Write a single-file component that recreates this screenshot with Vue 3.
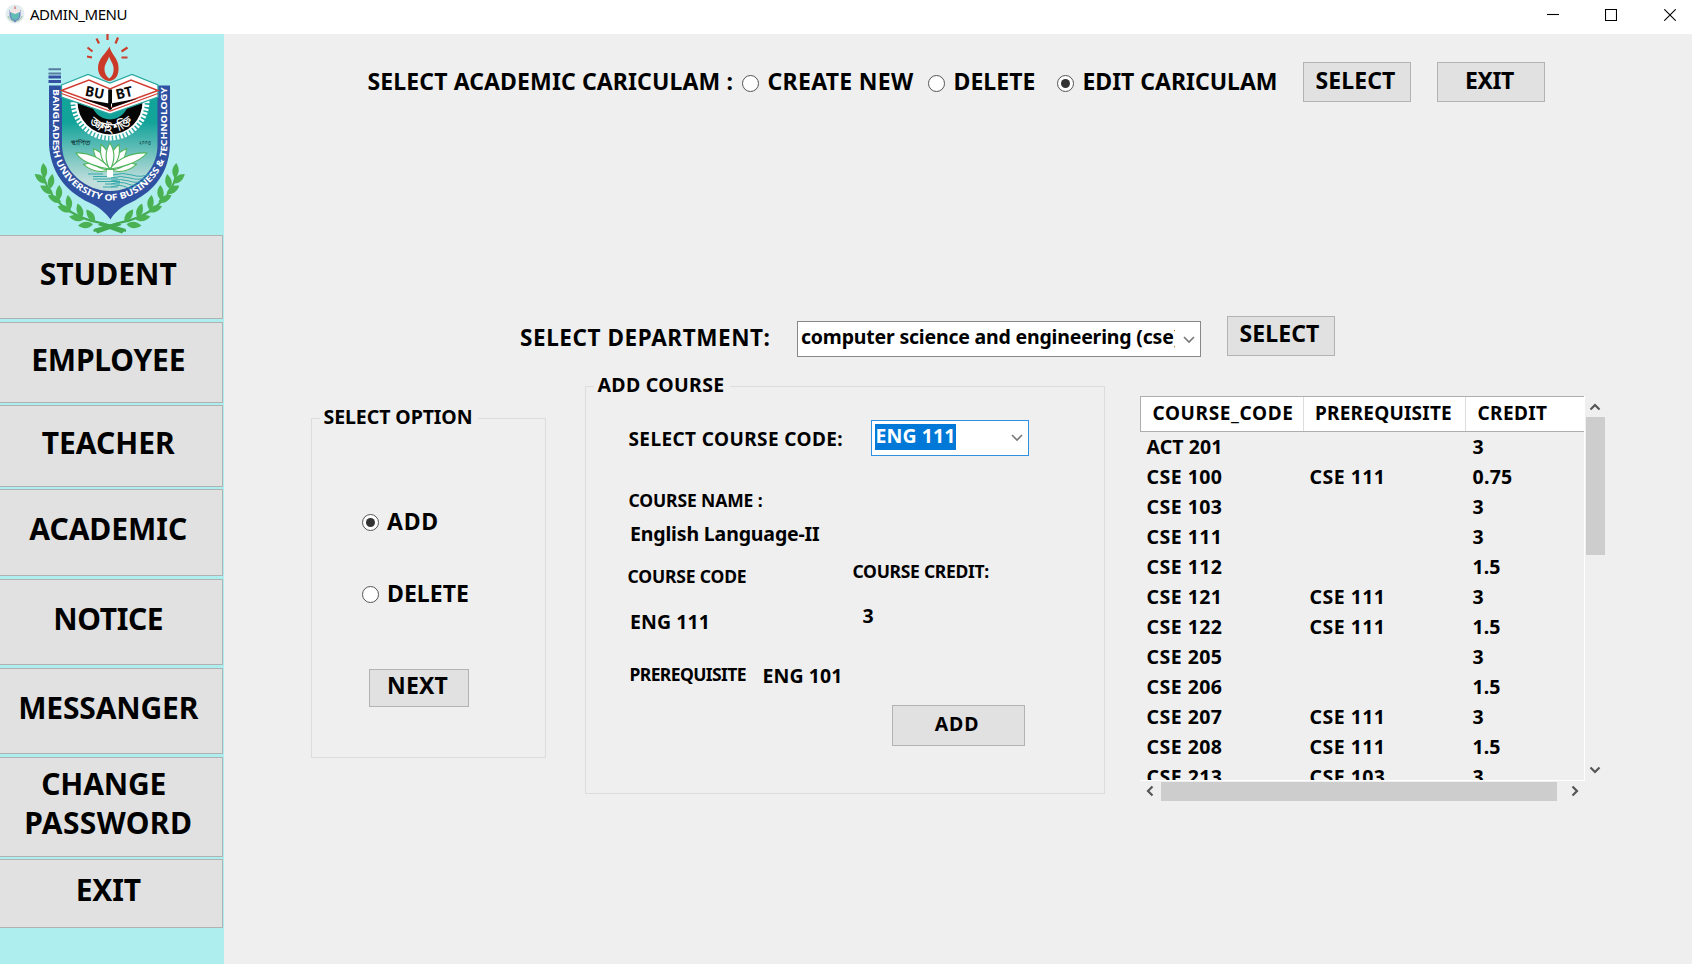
<script setup>
const menu = [
  { lines: [{ text: 'STUDENT', w: 137 }], cls: 'm1' },
  { lines: [{ text: 'EMPLOYEE', w: 154 }], cls: 'm2' },
  { lines: [{ text: 'TEACHER', w: 133 }], cls: 'm3' },
  { lines: [{ text: 'ACADEMIC', w: 158 }], cls: 'm4' },
  { lines: [{ text: 'NOTICE', w: 110 }], cls: 'm5' },
  { lines: [{ text: 'MESSANGER', w: 180 }], cls: 'm6' },
  { lines: [{ text: 'CHANGE', w: 125, nudge: true }, { text: 'PASSWORD', w: 168 }], cls: 'm7' },
  { lines: [{ text: 'EXIT', w: 65 }], cls: 'm8' },
]

const rows = [
  ['ACT 201', '', '3'],
  ['CSE 100', 'CSE 111', '0.75'],
  ['CSE 103', '', '3'],
  ['CSE 111', '', '3'],
  ['CSE 112', '', '1.5'],
  ['CSE 121', 'CSE 111', '3'],
  ['CSE 122', 'CSE 111', '1.5'],
  ['CSE 205', '', '3'],
  ['CSE 206', '', '1.5'],
  ['CSE 207', 'CSE 111', '3'],
  ['CSE 208', 'CSE 111', '1.5'],
  ['CSE 213', 'CSE 103', '3'],
]
const cellWidth = (t) => ({ 3: 12, 1.5: 28, 0.75: 40 })[t] || (t ? 76 : 0)

const petals = [-78, 78, -58, 58, -38, 38, -19, 19, 0]
const leaves = [
  [44, 171, -6], [41, 179, -52], [51, 182, 10], [47, 190, -58], [59, 193, 2],
  [55, 199, -62], [69, 203, -8], [65, 209, -70], [80, 211, -18], [77, 218, -80], [91, 216, -35], [86, 225, -96],
]

// Tracks a label out (or in) so that it fills the given width in pixels.
const vFit = {
  mounted(el, { value }) {
    if (!value || !el.textContent) return
    const range = document.createRange()
    range.selectNodeContents(el)
    const width = range.getBoundingClientRect().width
    el.style.letterSpacing = `${(value - width) / el.textContent.trim().length}px`
  },
}
</script>

<template>
  <div class="window">
    <header class="titlebar">
      <svg class="app-icon" viewBox="0 0 20 20">
        <circle cx="10" cy="10" r="9.5" fill="#e3ecee" />
        <path d="M4.500 6v5c0 4 3 5.500 5.500 7.500 2.500-2 5.500-3.500 5.500-7.500V6" fill="#6f88c0" />
        <path d="M6 8h8v4c0 2-2 3-4 4-2-1-4-2-4-4z" fill="#5fbdb6" />
        <path d="M5 6l3-1 2 1 2-1 3 1v2l-5 2-5-2z" fill="#f4e5e4" />
        <path d="M10 1.500l1.200 2.800-1.200 1-1.200-1z" fill="#d98680" />
        <path d="M3 12c1 3 3 5 6 5M17 12c-1 3-3 5-6 5" fill="none" stroke="#94c6a2" />
      </svg>
      <span class="title" v-fit="97">ADMIN_MENU</span>
      <div class="controls">
        <svg class="min" viewBox="0 0 12 12"><path d="M0 5.500h12" /></svg>
        <svg viewBox="0 0 12 12"><path d="M.5.5h11v11H.5z" /></svg>
        <svg viewBox="0 0 12 12"><path d="M.3.3l11.400 11.400M11.700.3L.3 11.700" /></svg>
      </div>
    </header>

    <div class="body">
      <nav class="sidebar">
        <svg class="crest" viewBox="0 34 223 201">
          <defs>
            <linearGradient id="field" x1="0" y1="0" x2="0" y2="1">
              <stop offset="0.300" stop-color="#12a399" />
              <stop offset="0.900" stop-color="#bfdedc" />
            </linearGradient>
            <clipPath id="below"><path d="M62 100H158V160H62z" /></clipPath>
            <path id="motto" d="M52.500 89V146C54 173 80 199.500 110 200.500C140 199.500 166 173 167.500 146V87" />
            <path id="arc" d="M89 121C99 136 122 136 135 119" />
          </defs>
          <path d="M92 57.500L87 56.500M92.500 51.500L87.500 47.500M99 43.500L96.500 38.500M107.500 40V34M115.500 43.500L118 37.500M121.500 51.500L127.500 47.500M121.500 57.500H127.500" stroke="#cb3f2c" stroke-width="2.200" />
          <path d="M109.500 46.500C106 54 98 58 98 68C98 76 104 80.500 109.500 81C116 80 119 75 118.500 67C118 58 111 54 109.500 46.500zM109 56.500C111 62 114.500 65 113.500 71C113 75 111 77.500 109 78.500C106 76 104.500 73 104.500 69C104.500 64 108 61 109 56.500z" fill="#cb3a29" fill-rule="evenodd" />
          <path d="M48.500 69.300H61M48.500 73.500H61" stroke="#587ba0" stroke-width="2" />
          <path d="M48.500 77H61M48.500 81.500H61" stroke="#3451a3" stroke-width="3" />
          <path d="M49 85.500H62V98H157.500V85.500H170V145C169 178 148 194 132 202C122 206 114 213 110.500 219.500C106 213 98 206 88 202C72 194 51 178 49 145z" fill="#2f51a2" />
          <path d="M62 92H157.500V146C157 172 134 191 110 191C86 191 63 172 62 146z" fill="url(#field)" />
          <g clip-path="url(#below)">
            <circle cx="110" cy="101" r="36.500" fill="none" stroke="#fff" stroke-width="6" stroke-dasharray="2.200 1.500" />
            <circle cx="110" cy="101" r="35" fill="#fff" />
            <circle cx="110" cy="102" r="32.500" fill="#050505" />
            <circle cx="110" cy="101" r="18.500" fill="#15a198" />
          </g>
          <path d="M61.500 85L88 74.500L110 83L132 74.500L158 85V97L110 114L61.500 97z" fill="#fff" stroke="#28aaa0" stroke-width="1.300" />
          <path d="M61.500 90.500L89 80L110 89L131 80L158 90.500L110 108z" fill="#fff" stroke="#d23d32" stroke-width="1.500" />
          <path d="M61.500 93.500L110 111L158 93.500" fill="none" stroke="#d23d32" stroke-width="1.200" />
          <path d="M108.200 89.500H112V109L110 110L108.200 109zM109 108L81 98.500L109 103.500zM111 108L138 98.500L111 103.500z" fill="#070707" />
          <g class="crest-word">
            <text x="84.500" y="95.500" transform="rotate(11 84.500 95.500)" textLength="19" lengthAdjust="spacingAndGlyphs">BU</text>
            <text x="117" y="99.500" transform="rotate(-13 117 99.500)" textLength="17" lengthAdjust="spacingAndGlyphs">BT</text>
          </g>
          <text class="bangla white"><textPath href="#arc" startOffset="1" textLength="50" lengthAdjust="spacingAndGlyphs">জ্ঞানই শক্তি</textPath></text>
          <text class="bangla dark" x="71" y="145">স্থাপিত</text>
          <text class="bangla dark" x="139" y="145" textLength="12" lengthAdjust="spacingAndGlyphs">২০০৩</text>
          <g fill="#fff" stroke="#4eb45b" stroke-width="1.100">
            <path v-for="p in petals" :key="p" :transform="`rotate(${p} 110 170)`" d="M110 170C104.500 160 104.500 152 110 143L110 143C115.500 152 115.500 160 110 170z" />
            <path d="M110 169C100 168 82 163 76 153C88 152 102 158 110 169zM110 169C120 168 138 163 147 153C133 152 118 158 110 169z" />
          </g>
          <g stroke="#35a9aa" stroke-width="1" fill="none">
            <path d="M88 174H103M93 176.500H111M93 179H118M97 181.500H120M105 184H120M103 187H118" />
            <path d="M113 175q10-3 19 0t18-1M111 178q10-3 19 0t18-1M111 181q10-3 18 0t17-1M111 184q10-3 17 0t14-1M111 187q9-3 15 0t9-1" />
          </g>
          <rect x="107" y="170" width="6" height="7" fill="#fff" />
          <text class="motto"><textPath href="#motto" textLength="288" lengthAdjust="spacingAndGlyphs">BANGLADESH UNIVERSITY OF BUSINESS &amp; TECHNOLOGY</textPath></text>
          <g v-for="side in [1, -1]" :key="side" :transform="side === 1 ? '' : 'translate(219.500 0) scale(-1 1)'">
            <path d="M43 171C46 199 72 218 101 223L126 231" fill="none" stroke="#43a951" stroke-width="2" />
            <path d="M101 222L126 229L122 233.500L98 225z" fill="#43a951" />
            <path v-for="(l, i) in leaves" :key="i" :transform="`translate(${l[0]} ${l[1]}) rotate(${l[2]})`" d="M0 7C-4.500 3-4-3 0-8C4-3 4.500 2 0 7z" fill="#4bb254" />
          </g>
        </svg>
        <button v-for="m in menu" :key="m.cls" :class="['menu', m.cls]">
          <span v-for="l in m.lines" :key="l.text" :class="['menu-line', { nudge: l.nudge }]"><span v-fit="l.w">{{ l.text }}</span></span>
        </button>
      </nav>

      <main class="main">
        <section class="top-row">
          <span class="head-label" v-fit="365.500">SELECT ACADEMIC CARICULAM :</span>
          <i class="radio r-create"></i><span v-fit="146">CREATE NEW</span>
          <i class="radio r-delete"></i><span v-fit="82">DELETE</span>
          <i class="radio on r-edit"></i><span v-fit="195">EDIT CARICULAM</span>
          <button class="btn btn-select"><span v-fit="80">SELECT</span></button>
          <button class="btn btn-exit"><span v-fit="49">EXIT</span></button>
        </section>

        <section class="dept-row">
          <span class="dept-label" v-fit="250.500">SELECT DEPARTMENT:</span>
          <div class="combo dept-combo">
            <span class="combo-text"><span v-fit="379">computer science and engineering (cse)</span></span>
            <svg class="chev" viewBox="0 0 12 8"><path d="M1 1l5 5 5-5" /></svg>
          </div>
          <button class="btn dept-btn"><span v-fit="80">SELECT</span></button>
        </section>

        <section class="panels">
          <fieldset class="box option-box">
            <legend><span v-fit="149">SELECT OPTION</span></legend>
            <div class="option o-add"><i class="radio on"></i><span v-fit="52">ADD</span></div>
            <div class="option o-del"><i class="radio"></i><span v-fit="82">DELETE</span></div>
            <button class="btn next"><span v-fit="61">NEXT</span></button>
          </fieldset>

          <fieldset class="box course-box">
            <legend><span v-fit="127">ADD COURSE</span></legend>
            <div class="line l-select">
              <span class="code-label" v-fit="214.500">SELECT COURSE CODE:</span>
              <div class="combo code-combo">
                <span class="picked"><span v-fit="80">ENG 111</span></span>
                <svg class="chev" viewBox="0 0 12 8"><path d="M1 1l5 5 5-5" /></svg>
              </div>
            </div>
            <div class="line l-name small"><span v-fit="134">COURSE NAME :</span></div>
            <div class="line l-lang"><span v-fit="189.500">English Language-II</span></div>
            <div class="line l-heads small">
              <div class="left"><span v-fit="119">COURSE CODE</span></div>
              <div class="right"><span v-fit="136.500">COURSE CREDIT:</span></div>
            </div>
            <div class="line l-values">
              <div class="left"><span v-fit="80">ENG 111</span></div>
              <div class="right">3</div>
            </div>
            <div class="line l-pre">
              <div class="small pre-label"><span v-fit="116.500">PREREQUISITE</span></div>
              <div class="pre-value"><span v-fit="80">ENG 101</span></div>
            </div>
            <button class="btn add"><span v-fit="44.500">ADD</span></button>
          </fieldset>

          <div class="table">
            <div class="view">
              <div class="thead">
                <div><span v-fit="141">COURSE_CODE</span></div>
                <div><span v-fit="137">PREREQUISITE</span></div>
                <div><span v-fit="70">CREDIT</span></div>
              </div>
              <div class="tbody">
                <div v-for="r in rows" :key="r[0]" class="tr">
                  <div v-for="(c, i) in r" :key="i"><span v-fit="cellWidth(c)">{{ c }}</span></div>
                </div>
              </div>
            </div>
            <div class="vbar">
              <svg viewBox="0 0 12 8"><path d="M1.500 6.500l4.500-4.500 4.500 4.500" /></svg>
              <div class="vthumb"></div>
              <svg class="down" viewBox="0 0 12 8"><path d="M1.500 1.500l4.500 4.500 4.500-4.500" /></svg>
            </div>
            <div class="hbar">
              <svg viewBox="0 0 8 12"><path d="M6.500 1.500L2 6l4.500 4.500" /></svg>
              <div class="hthumb"></div>
              <svg class="fwd" viewBox="0 0 8 12"><path d="M1.500 1.500L6 6l-4.500 4.500" /></svg>
            </div>
          </div>
        </section>
      </main>
    </div>
  </div>
</template>

<style>
body { margin: 0; overflow: hidden; }
</style>

<style scoped>
* { box-sizing: border-box; }
.window {
  width: 1692px; height: 964px; display: flex; flex-direction: column; overflow: hidden;
  background: #efefef; color: #000; font: 700 19.5px "Noto Sans", "Open Sans", sans-serif; white-space: nowrap;
}
.titlebar { height: 34px; flex: none; background: #fff; display: flex; align-items: flex-start; padding-left: 5px; }
.app-icon { width: 20px; height: 20px; margin-top: 4px; }
.title { font-size: 15px; font-weight: 400; line-height: 28px; margin-left: 5px; }
.controls { margin-left: auto; display: flex; gap: 47px; padding: 9px 16px 0 0; }
.controls svg { width: 12px; height: 12px; fill: none; stroke: #000; stroke-width: 1.1; }
.controls .min { margin-right: -1px; }
.body { flex: 1; display: flex; min-height: 0; }

.sidebar { width: 223.500px; flex: none; background: #afeeee; display: flex; flex-direction: column; align-items: flex-start; }
.crest { width: 223px; height: 201px; display: block; flex: none; }
.crest text { font-family: "Noto Sans", sans-serif; font-weight: 700; }
.crest-word { font-size: 14px; fill: #0a0a0a; }
.bangla.white { font-size: 12px; fill: #fff; }
.bangla.dark { font-size: 7px; fill: #17484a; }
.motto { font-size: 8.800px; fill: #fff; }
.menu {
  width: 222.500px; flex: none; margin: 0 0 2.5px; padding: 0 5px 0 0; border: 1.500px solid #b0b2b2; border-left: 0;
  background: #e1e1e1; font: inherit; font-size: 30px; line-height: 39px; color: #000;
  display: flex; flex-direction: column; justify-content: flex-start; align-items: center;
}
.m1 { height: 84px; padding-top: 18px; }
.m2 { height: 81px; padding-top: 17px; }
.m3 { height: 81.5px; padding-top: 17px; }
.m4 { height: 87px; padding-top: 19px; }
.m5 { height: 86.5px; padding-top: 19px; }
.m6 { height: 86.5px; padding-top: 19px; }
.m7 { height: 100px; padding-top: 6px; }
.m8 { height: 69px; padding-top: 10px; }
.menu-line { display: block; }
.nudge { margin-right: 9px; }

.main { flex: 1; display: flex; flex-direction: column; min-width: 0; padding-top: 27px; }
.btn {
  flex: none; margin: 0; padding: 0 2px 0 0; border: 1.500px solid #b3b3b3; background: #e1e1e1; color: #000; font: inherit;
  display: flex; justify-content: center; align-items: flex-start;
}
.radio { flex: none; width: 17px; height: 17px; border: 1.300px solid #555; border-radius: 50%; background: #fff; display: flex; align-items: center; justify-content: center; }
.radio.on::after { content: ""; width: 9px; height: 9px; border-radius: 50%; background: #333; }

.top-row { height: 41px; display: flex; align-items: center; font-size: 23px; line-height: 40px; padding-left: 144px; }
.top-row > span { flex: none; position: relative; top: -0.5px; }
.top-row .radio { margin-top: 4px; margin-right: 9px; }
.head-label { width: 366px; }
.r-create { margin-left: 8px; }
.r-delete { margin-left: 14px; }
.r-edit { margin-left: 21px; }
.btn-select, .btn-exit { width: 108px; height: 40px; line-height: 34px; }
.btn-select { margin-left: 25px; }
.btn-exit { margin-left: 26px; }

.dept-row { height: 41px; margin-top: 214px; display: flex; align-items: flex-start; padding-left: 296.500px; }
.dept-label { width: 250.500px; font-size: 22.500px; line-height: 44px; }
.combo { border: 1.500px solid #888; background: #fff; display: flex; align-items: flex-start; }
.dept-combo { width: 404px; height: 36px; margin: 5px 0 0 26px; }
.combo-text { width: 374px; flex: none; margin-left: 3.5px; overflow: hidden; line-height: 29px; }
.chev { width: 12px; height: 8px; flex: none; fill: none; stroke: #777; stroke-width: 1.600; margin: 14px 0 0 8px; }
.dept-btn { width: 108px; height: 40px; margin-left: 26px; font-size: 23px; line-height: 33px; }

.panels { display: flex; align-items: flex-start; }
.box { margin: 0; padding: 0; min-width: 0; border: 1.500px solid #dcdcdc; flex: none; }
.box legend { margin-left: 8px; padding: 0 5px 4px 4px; line-height: 23px; }
.option-box { width: 235px; height: 353px; margin: 48px 0 0 87px; }
.option { display: flex; align-items: center; font-size: 23px; line-height: 30px; padding-left: 50px; gap: 8.5px; }
.option .radio { margin-top: 2px; }
.o-add { margin-top: 74px; }
.o-del { margin-top: 42px; }
.next { width: 100px; height: 38px; margin: 61px 0 0 57px; font-size: 23px; line-height: 31px; }

.course-box { width: 520px; height: 421px; margin: 16px 0 0 39px; }
.line { display: flex; align-items: flex-start; line-height: 24px; }
.small { font-size: 17.500px; }
.l-select { margin-top: 20px; padding-left: 43px; font-size: 19px; line-height: 38px; }
.code-label { width: 215px; }
.code-combo { width: 158px; height: 36px; margin-left: 27px; border-color: #318fdf; font-size: 19.500px; }
.picked { background: #0078d7; color: #fff; height: 26px; line-height: 23px; margin: 3px 0 0 3px; padding-left: 1px; width: 81px; flex: none; }
.code-combo .chev { margin: 13px 0 0 55px; }
.l-name { margin-top: 30px; padding-left: 43px; }
.l-lang { margin-top: 10px; padding-left: 44.500px; }
.l-heads { margin-top: 18px; padding-left: 42px; }
.left { width: 225px; }
.l-heads .right { margin-top: -5px; }
.l-values { margin-top: 22px; padding-left: 44.500px; }
.l-values .right { margin: -6px 0 0 7.500px; }
.l-pre { margin-top: 28px; padding-left: 44px; }
.pre-label { width: 133px; }
.pre-value { margin-top: 2px; height: 22px; }
.add { width: 133px; height: 41px; margin: 19px 0 0 306px; line-height: 36px; }

.table { display: grid; grid-template-columns: 445px 20px; grid-template-rows: 385px 20px; margin: 39px 0 0 35.500px; }
.view { overflow: hidden; border-right: 1px solid #fff; border-bottom: 1px solid #fff; }
.thead { height: 36px; display: flex; background: #fff; border: 1.500px solid #aeaeae; border-right: 0; line-height: 32px; font-size: 19px; }
.thead div { width: 162.500px; flex: none; padding-left: 11.500px; border-right: 1px solid #ddd; }
.thead div:last-child { width: 119px; border: 0; }
.tr { display: flex; height: 30px; line-height: 30px; padding-left: 6.500px; }
.tbody { margin-top: -0.5px; }
.tr div { width: 163px; flex: none; }
.vbar { display: flex; flex-direction: column; align-items: center; padding: 7px 0 7px; }
.vbar svg { width: 12px; height: 8px; }
.vbar svg, .hbar svg { fill: none; stroke: #555; stroke-width: 2.200; }
.vthumb { width: 19px; height: 138px; margin-top: 6px; background: #cdcdcd; }
.down { margin-top: auto; }
.hbar { display: flex; align-items: center; padding-left: 5.5px; }
.hbar svg { width: 8px; height: 12px; }
.hthumb { width: 396px; height: 19px; margin-left: 7px; background: #cdcdcd; }
.fwd { margin-left: 14px; }
</style>
